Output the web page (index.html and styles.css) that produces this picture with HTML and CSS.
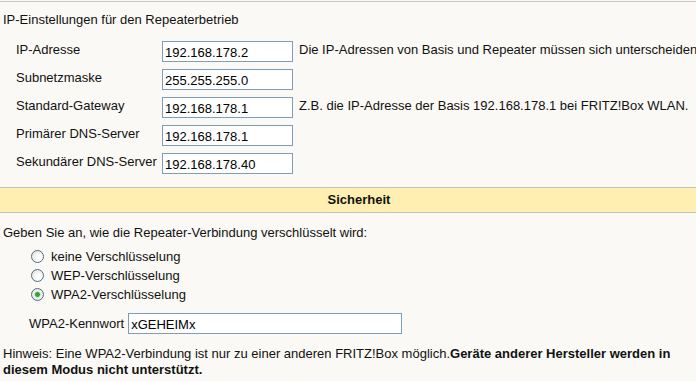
FILE: index.html
```html
<!DOCTYPE html>
<html lang="de">
<head>
  <meta charset="UTF-8">
  <title>Repeater</title>
  <link rel="stylesheet" href="styles.css">
</head>
<body>
  <div class="page">
    <!-- IP-Einstellungen -->
    <section class="ip">
      <p class="intro">IP-Einstellungen für den Repeaterbetrieb</p>
      <div class="ip-grid">
        <label class="lbl">IP-Adresse</label>
        <input class="field" type="text" value="192.168.178.2">
        <span class="hint">Die IP-Adressen von Basis und Repeater müssen sich unterscheiden</span>

        <label class="lbl">Subnetzmaske</label>
        <input class="field" type="text" value="255.255.255.0">
        <span class="hint"></span>

        <label class="lbl">Standard-Gateway</label>
        <input class="field" type="text" value="192.168.178.1">
        <span class="hint">Z.B. die IP-Adresse der Basis 192.168.178.1 bei FRITZ!Box WLAN.</span>

        <label class="lbl">Primärer DNS-Server</label>
        <input class="field" type="text" value="192.168.178.1">
        <span class="hint"></span>

        <label class="lbl">Sekundärer DNS-Server</label>
        <input class="field" type="text" value="192.168.178.40">
        <span class="hint"></span>
      </div>
    </section>

    <!-- Sicherheit -->
    <h2 class="band">Sicherheit</h2>
    <section class="security">
      <p class="intro">Geben Sie an, wie die Repeater-Verbindung verschlüsselt wird:</p>
      <div class="radios">
        <label class="radio"><input type="radio" name="enc"> keine Verschlüsselung</label>
        <label class="radio"><input type="radio" name="enc"> WEP-Verschlüsselung</label>
        <label class="radio"><input type="radio" name="enc" checked> WPA2-Verschlüsselung</label>
      </div>
      <div class="key-row">
        <label class="key-lbl">WPA2-Kennwort</label>
        <input class="field key" type="text" value="xGEHEIMx">
      </div>
      <p class="note">Hinweis: Eine WPA2-Verbindung ist nur zu einer anderen FRITZ!Box möglich.<b>Geräte anderer Hersteller werden in diesem Modus nicht unterstützt.</b></p>
    </section>
  </div>
</body>
</html>
```

FILE: styles.css
```css
html, body {
  margin: 0;
  padding: 0;
  background: #faf9f5;
}
body {
  font-family: 'Liberation Sans', Arial, sans-serif;
  font-size: 13px;
  color: #111;
  overflow: hidden;
}
.page {
  margin-top: 1px;
  border-top: 1px solid #c8c8c4;
}
p {
  margin: 0;
}
.intro {
  line-height: 16px;
  padding-left: 3px;
  white-space: nowrap;
}
.ip .intro {
  margin-top: 10px;
}
.ip-grid {
  display: grid;
  grid-template-columns: 146px 131px auto;
  row-gap: 7px;
  margin-top: 13px;
  padding-left: 16px;
}
.lbl {
  line-height: 16px;
  padding-top: 1px;
  white-space: nowrap;
}
.hint {
  line-height: 16px;
  padding: 1px 0 0 6px;
  white-space: nowrap;
  overflow: hidden;
}
.field {
  box-sizing: border-box;
  width: 131px;
  height: 21px;
  margin: 0;
  padding: 2px 2px 0;
  border: 1px solid #7f9db9;
  background: #fff;
  font-family: 'Liberation Sans', Arial, sans-serif;
  font-size: 13px;
  color: #000;
  outline: none;
}
.band {
  margin: 13px 0 0;
  height: 24px;
  line-height: 24px;
  border-top: 1px solid #c4c4bc;
  border-bottom: 1px solid #c4c4bc;
  background: #ffefb0;
  font-size: 13px;
  font-weight: bold;
  text-align: center;
  padding-left: 22px;
}
.security .intro {
  margin-top: 12px;
}
.radios {
  display: flex;
  flex-direction: column;
  margin-top: 6px;
  padding-left: 31px;
}
.radio {
  display: flex;
  align-items: center;
  gap: 7px;
  height: 19px;
}
.radio input {
  appearance: none;
  -webkit-appearance: none;
  box-sizing: border-box;
  width: 13px;
  height: 13px;
  margin: 0;
  border: 1px solid #4f6b87;
  border-radius: 50%;
  background: radial-gradient(circle at 65% 65%, #ffffff 20%, #dcdcd6 100%);
}
.radio input:checked {
  background: radial-gradient(circle, #2ea32e 0 2px, #9fd49f 2.5px, #f4f4f0 3.5px, #dcdcd6 100%);
}
.key-row {
  display: flex;
  align-items: center;
  gap: 4px;
  margin-top: 9px;
  padding-left: 29px;
}
.key.field {
  width: 274px;
}
.note {
  margin-top: 12px;
  padding: 0 3px;
  line-height: 16px;
}
```
